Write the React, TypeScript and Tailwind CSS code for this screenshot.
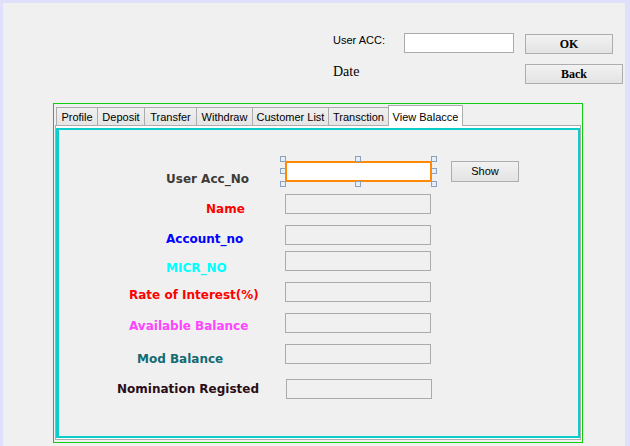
import React from "react";

const tabs = [
  { name: "Profile", w: 42 },
  { name: "Deposit", w: 48 },
  { name: "Transfer", w: 53 },
  { name: "Withdraw", w: 57 },
  { name: "Customer List", w: 77 },
  { name: "Transction", w: 61 },
];

const rows = [
  { label: "User Acc_No", color: "text-[#3d3a36]", pl: "pl-[107px]", lt: "mt-[10px]", h: "h-[33px]", active: true },
  { label: "Name", color: "text-[#ff0000]", pl: "pl-[147px]", lt: "mt-[7px]", h: "h-[31px]" },
  { label: "Account_no", color: "text-[#0000ff]", pl: "pl-[107px]", lt: "mt-[6px]", h: "h-[26px]" },
  { label: "MICR_NO", color: "text-[#00ffff]", pl: "pl-[107px]", lt: "mt-[9px]", h: "h-[31px]" },
  { label: "Rate of Interest(%)", color: "text-[#ff0000]", pl: "pl-[70px]", lt: "mt-[5px]", h: "h-[31px]" },
  { label: "Available Balance", color: "text-[#ff44ff]", pl: "pl-[70px]", lt: "mt-[5px]", h: "h-[31px]" },
  { label: "Mod Balance", color: "text-[#126b73]", pl: "pl-[78px]", lt: "mt-[7px]", h: "h-[35px]" },
  { label: "Nomination Registed", color: "text-[#2b0d18]", pl: "pl-[58px]", lt: "mt-[2px]", h: "h-[21px]", shift: true },
];

function Handle({ className }: { className: string }) {
  return <span className={`absolute w-[6px] h-[6px] border border-[#8aa2c0] bg-[#e8eef6] ${className}`} />;
}

export default function App() {
  return (
    <div className="w-[630px] h-[446px] bg-[#e0e0fc] pl-[3px] pt-[3px] pr-[5px] overflow-hidden">
      <div className="h-full bg-[#f0f0f0] flex flex-col font-['Liberation_Sans',Arial,sans-serif] text-[11px] text-black">
        {/* header */}
        <div className="flex items-start ml-[330px] mt-[30px]">
          <span className="w-[71px] mt-[1px] leading-[13px]">User ACC:</span>
          <div className="w-[110px] h-[20px] bg-white border border-[#ababab]" />
          <button className="ml-[11px] mt-[1px] w-[88px] h-[20px] border border-[#adadad] bg-gradient-to-b from-[#f2f2f2] to-[#e3e3e3] font-['Liberation_Serif',serif] font-bold text-[12px] leading-none">
            OK
          </button>
        </div>
        <div className="flex items-start ml-[330px] mt-[10px]">
          <span className="w-[192px] font-['Liberation_Serif',serif] text-[14px] leading-[15px]">Date</span>
          <button className="w-[98px] h-[20px] border border-[#adadad] bg-gradient-to-b from-[#f2f2f2] to-[#e3e3e3] font-['Liberation_Serif',serif] font-bold text-[12px] leading-none">
            Back
          </button>
        </div>

        {/* green container */}
        <div className="ml-[50px] mt-[19px] w-[530px] h-[340px] border border-[#10cc10] pt-[1px] pl-[1px]">
          {/* tab strip */}
          <div className="flex items-end h-[20px] pl-[1px]">
            {tabs.map((t, i) => (
              <div
                key={t.name}
                style={{ width: t.w }}
                className={`h-[18px] flex items-center justify-center pt-[1px] border border-b-0 border-[#acacac] bg-gradient-to-b from-[#f0f0f0] to-[#e5e5e5] ${i > 0 ? "-ml-px" : ""}`}
              >
                {t.name}
              </div>
            ))}
            <div className="-ml-px w-[75px] h-[21px] -mb-px relative z-10 flex items-start justify-center pt-[3px] border border-b-0 border-[#acacac] bg-white">
              View Balacce
            </div>
          </div>

          {/* tab body */}
          <div className="w-[526px] h-[315px] border border-[#acacac] bg-white pt-[2px] pb-[1px]">
            <div className="h-full border-2 border-l-[3px] border-[#0ccccc] bg-[#f0f0f0] pt-[31px] flex flex-col font-['DejaVu_Sans',sans-serif] font-bold text-[12px] leading-[16px]">
              {rows.map((r) => (
                <div key={r.label} className={`flex items-start shrink-0 ${r.h}`}>
                  <div className={`w-[226px] ${r.pl}`}>
                    <span className={`block ${r.lt} ${r.color}`}>{r.label}</span>
                  </div>
                  {r.active ? (
                    <>
                      <div className="relative w-[147px] h-[21px] bg-white border-2 border-solid border-orange-400">
                        <Handle className="-left-[7px] -top-[7px]" />
                        <Handle className="left-[68px] -top-[7px]" />
                        <Handle className="-right-[7px] -top-[7px]" />
                        <Handle className="-left-[7px] top-[5px]" />
                        <Handle className="-right-[7px] top-[5px]" />
                        <Handle className="-left-[7px] -bottom-[7px]" />
                        <Handle className="left-[68px] -bottom-[7px]" />
                        <Handle className="-right-[7px] -bottom-[7px]" />
                      </div>
                      <button className="ml-[19px] w-[68px] h-[21px] border border-[#adadad] bg-gradient-to-b from-[#f2f2f2] to-[#e3e3e3] font-['Liberation_Sans',Arial,sans-serif] font-normal text-[11px] leading-none text-black">
                        Show
                      </button>
                    </>
                  ) : (
                    <div className={`w-[146px] h-[20px] border border-[#ababab] bg-[#f0f0f0] ${r.shift ? "ml-[1px]" : ""}`} />
                  )}
                </div>
              ))}
            </div>
          </div>
        </div>
      </div>
    </div>
  );
}
